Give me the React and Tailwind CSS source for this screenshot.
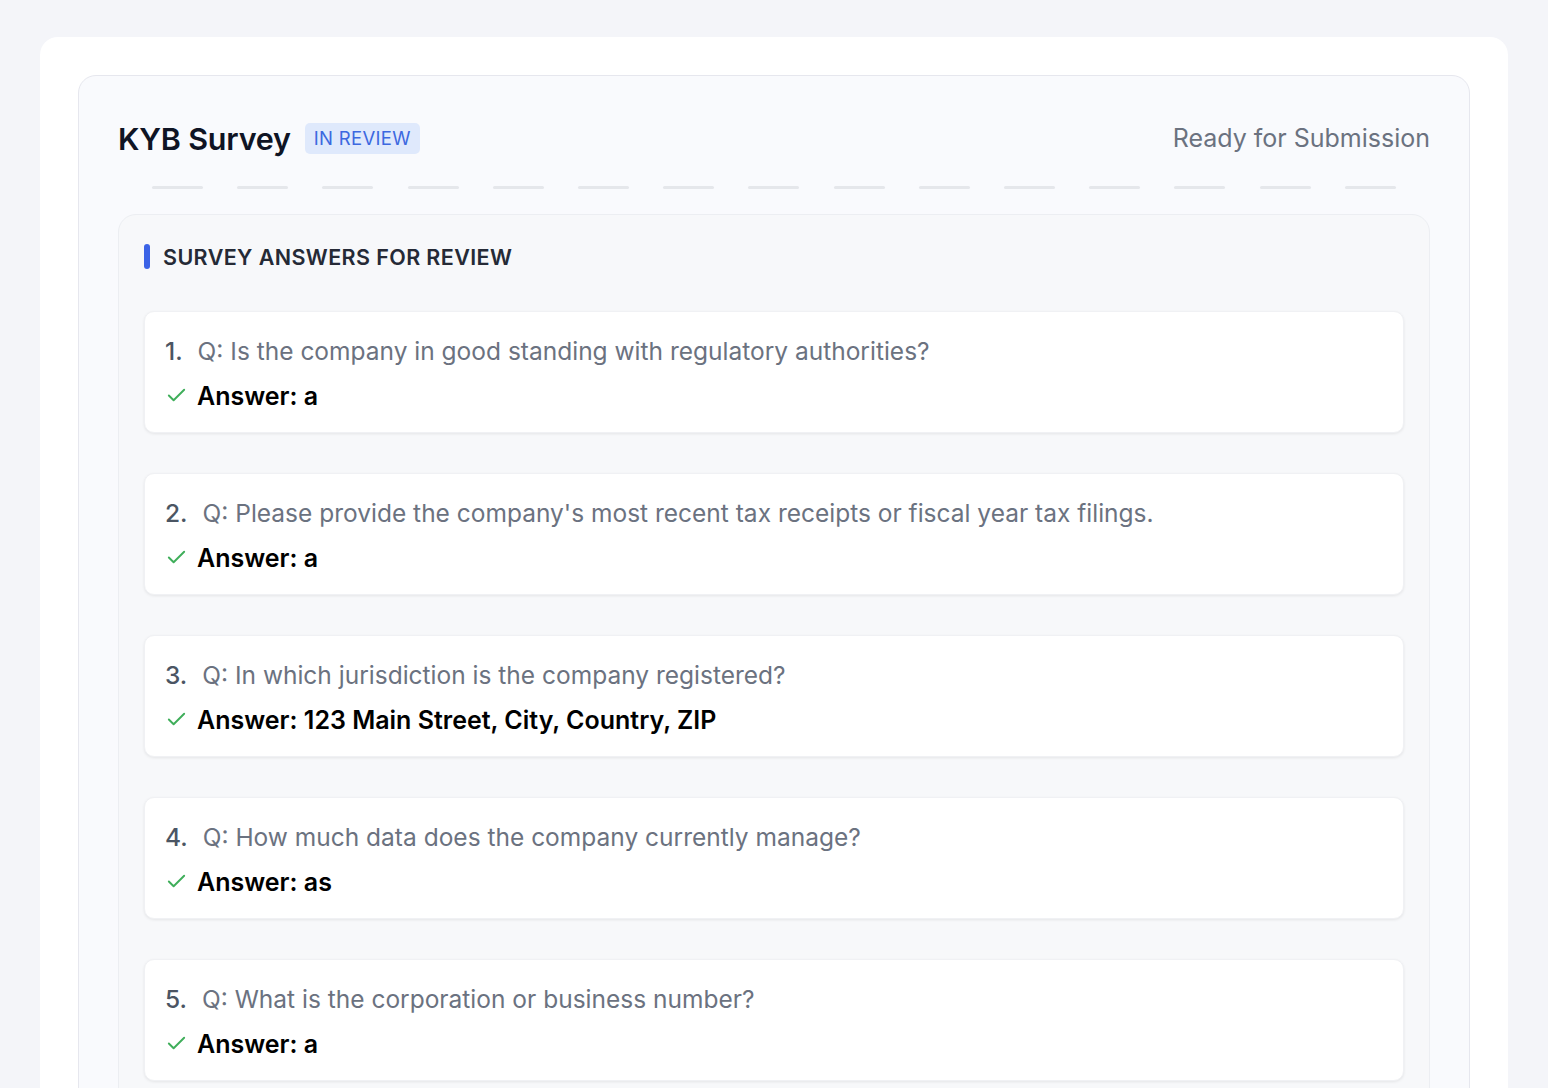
import React from "react";
import { Check } from "lucide-react";

const answers = [
  { q: "Is the company in good standing with regulatory authorities?", a: "a" },
  { q: "Please provide the company's most recent tax receipts or fiscal year tax filings.", a: "a" },
  { q: "In which jurisdiction is the company registered?", a: "123 Main Street, City, Country, ZIP" },
  { q: "How much data does the company currently manage?", a: "as" },
  { q: "What is the corporation or business number?", a: "a" },
];

export default function App() {
  const steps = Array.from({ length: 15 });

  return (
    <div
      className="min-h-screen bg-[#f4f5f9] pt-[37px] px-[40px] pb-10"
      style={{ fontFamily: "Inter, 'Noto Sans', sans-serif" }}
    >
      <div className="bg-white rounded-[18px] p-[38px]">
        <div className="bg-[#f9fafd] border border-[#e6e7ee] rounded-[18px] px-[39px] pt-[44px] pb-10">
          {/* Header */}
          <div className="flex items-center justify-between">
            <div className="flex items-center gap-[14px]">
              <h1 className="text-[30.5px] leading-[32px] font-semibold text-[#0f1424] tracking-[-0.2px]">
                KYB Survey
              </h1>
              <span className="bg-[#dfe9fc] text-[#3c68e0] text-[18.5px] leading-[31px] px-[9px] rounded-[5px] tracking-[0.3px]">
                IN REVIEW
              </span>
            </div>
            <span className="text-[25px] text-[#6b7280]">Ready for Submission</span>
          </div>

          {/* Steps */}
          <div className="flex justify-around px-[17px] mt-[28px]">
            {steps.map((_, i) => (
              <div key={i} className="w-[51px] h-[3px] rounded-full bg-[#e5e7eb]" />
            ))}
          </div>

          {/* Section */}
          <div className="mt-[25px] bg-[#f7f8fa] border border-[#eceef2] rounded-[18px] px-[25px] pt-[26px] pb-8">
            <div className="flex items-center gap-[13px]">
              <div className="w-[6px] h-[25px] rounded-full bg-[#3b63e6]" />
              <h2 className="text-[21.5px] font-semibold text-[#252a36] tracking-[0.4px]">
                SURVEY ANSWERS FOR REVIEW
              </h2>
            </div>

            <div className="mt-[38px] flex flex-col gap-[40px]">
              {answers.map((item, i) => (
                <div
                  key={i}
                  className="bg-white rounded-[10px] shadow-[0_1px_3px_rgba(0,0,0,0.08)] border border-[#f0f1f4] px-[20px] pt-[24px] pb-[21px]"
                >
                  <div className="text-[24.5px] leading-[30px] text-[#6b7280]">
                    <span className="font-medium text-[#4b5563] mr-[15px]">{i + 1}.</span>
                    Q: {item.q}
                  </div>
                  <div className="flex items-center gap-[9px] mt-[15px]">
                    <Check size={23} strokeWidth={2} className="text-[#3fae5a]" />
                    <span className="text-[25px] leading-[30px] font-semibold text-black">
                      Answer: {item.a}
                    </span>
                  </div>
                </div>
              ))}
            </div>
          </div>
        </div>
      </div>
    </div>
  );
}
